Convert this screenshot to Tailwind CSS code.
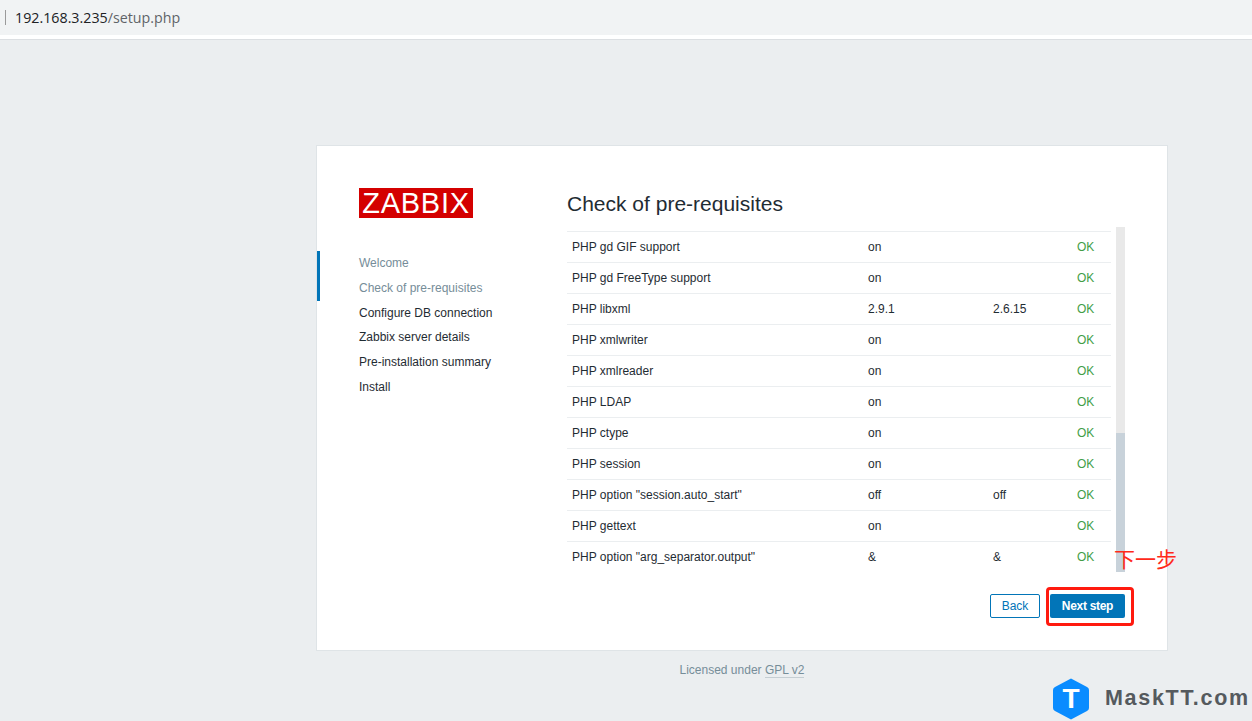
<!DOCTYPE html>
<html lang="en">
<head>
    <meta charset="UTF-8">
    <title>Zabbix setup</title>
    <script src="https://cdn.jsdelivr.net/npm/@tailwindcss/browser@4"></script>
</head>
<body class="relative h-[721px] w-[1252px] overflow-hidden bg-[#ebeef0] font-['Liberation_Sans',Arial,sans-serif] text-[12px] text-[#1f2c33]">

    <!-- browser address bar -->
    <div class="flex h-[35px] items-center bg-[#f1f3f4] pl-[5px]">
        <div class="h-[15px] w-px bg-[#9a9a9a]"></div>
        <div class="ml-[9px] font-['Open_Sans',sans-serif] text-[14.25px] text-[#202124]">192.168.3.235<span class="text-[#5f6368]">/setup.php</span></div>
    </div>
    <div class="h-[5px] border-b border-[#dcdfe2] bg-white"></div>

    <!-- setup card -->
    <div class="ml-[316px] mt-[105px] flex h-[506px] w-[852px] border border-[#dfe4e7] bg-white">
        <div class="w-[250px] shrink-0 pt-[42px]">
            <div class="ml-[42px] flex h-[30px] w-[114px] items-center justify-center bg-[#d40000] text-[29px] leading-none tracking-[0.75px] text-white">ZABBIX</div>
            <ul class="mt-[33px] leading-[14px]">
                <li class="border-l-[3px] border-[#0275b8] pb-[11px] pl-[39px] pt-[5px] text-[#768d99]">Welcome</li>
                <li class="border-l-[3px] border-[#0275b8] pb-[6px] pl-[39px] text-[#768d99]">Check of pre-requisites</li>
                <li class="mt-[5px] pl-[42px]">Configure DB connection</li>
                <li class="mt-[10px] pl-[42px]">Zabbix server details</li>
                <li class="mt-[11px] pl-[42px]">Pre-installation summary</li>
                <li class="mt-[11px] pl-[42px]">Install</li>
            </ul>
        </div>

        <div class="w-[558px] shrink-0">
            <h1 class="mt-[45px] h-[36px] text-[21px] leading-[26px] text-[#1f2c33]">Check of pre-requisites</h1>
            <div class="flex h-[345px]">
                <div class="w-[544px] pt-[4px]">
                    <div class="grid h-[31px] grid-cols-[296px_125px_84px_1fr] items-center border-t border-[#ebeef0] pl-[5px]"><span>PHP gd GIF support</span><span>on</span><span></span><span class="text-[#429e47]">OK</span></div>
                    <div class="grid h-[31px] grid-cols-[296px_125px_84px_1fr] items-center border-t border-[#ebeef0] pl-[5px]"><span>PHP gd FreeType support</span><span>on</span><span></span><span class="text-[#429e47]">OK</span></div>
                    <div class="grid h-[31px] grid-cols-[296px_125px_84px_1fr] items-center border-t border-[#ebeef0] pl-[5px]"><span>PHP libxml</span><span>2.9.1</span><span>2.6.15</span><span class="text-[#429e47]">OK</span></div>
                    <div class="grid h-[31px] grid-cols-[296px_125px_84px_1fr] items-center border-t border-[#ebeef0] pl-[5px]"><span>PHP xmlwriter</span><span>on</span><span></span><span class="text-[#429e47]">OK</span></div>
                    <div class="grid h-[31px] grid-cols-[296px_125px_84px_1fr] items-center border-t border-[#ebeef0] pl-[5px]"><span>PHP xmlreader</span><span>on</span><span></span><span class="text-[#429e47]">OK</span></div>
                    <div class="grid h-[31px] grid-cols-[296px_125px_84px_1fr] items-center border-t border-[#ebeef0] pl-[5px]"><span>PHP LDAP</span><span>on</span><span></span><span class="text-[#429e47]">OK</span></div>
                    <div class="grid h-[31px] grid-cols-[296px_125px_84px_1fr] items-center border-t border-[#ebeef0] pl-[5px]"><span>PHP ctype</span><span>on</span><span></span><span class="text-[#429e47]">OK</span></div>
                    <div class="grid h-[31px] grid-cols-[296px_125px_84px_1fr] items-center border-t border-[#ebeef0] pl-[5px]"><span>PHP session</span><span>on</span><span></span><span class="text-[#429e47]">OK</span></div>
                    <div class="grid h-[31px] grid-cols-[296px_125px_84px_1fr] items-center border-t border-[#ebeef0] pl-[5px]"><span>PHP option "session.auto_start"</span><span>off</span><span>off</span><span class="text-[#429e47]">OK</span></div>
                    <div class="grid h-[31px] grid-cols-[296px_125px_84px_1fr] items-center border-t border-[#ebeef0] pl-[5px]"><span>PHP gettext</span><span>on</span><span></span><span class="text-[#429e47]">OK</span></div>
                    <div class="grid h-[31px] grid-cols-[296px_125px_84px_1fr] items-center border-t border-[#ebeef0] pl-[5px]"><span>PHP option "arg_separator.output"</span><span>&amp;</span><span>&amp;</span><span class="text-[#429e47]">OK</span></div>
                </div>
                <!-- scrollbar -->
                <div class="ml-[5px] flex w-[9px] flex-col bg-[#e9e9e9]">
                    <div class="mt-auto h-[139px] bg-[#c8d2da]"></div>
                </div>
            </div>
            <div class="mt-[22px] flex justify-end gap-[10px]">
                <button class="h-[24px] w-[50px] rounded-[2px] border border-[#0275b8] bg-white text-[#0275b8]">Back</button>
                <button class="h-[24px] w-[75px] rounded-[2px] bg-[#0275b8] font-bold tracking-[-0.3px] text-white">Next step</button>
            </div>
        </div>
    </div>

    <div class="ml-[316px] mt-[12px] w-[852px] text-center leading-[14px] text-[#768d99]">Licensed under <span class="border-b border-[#c5ced3]">GPL v2</span></div>

    <!-- annotation on top of the screenshot -->
    <div class="absolute left-[1046px] top-[587px] h-[39px] w-[88px] rounded-[4px] border-[3px] border-[#ff1a0f]"></div>
    <div class="absolute left-[1114px] top-[543px] font-['Noto_Sans_CJK_SC',sans-serif] text-[21px] leading-[30px] text-[#ff2a1a]">下一步</div>

    <!-- watermark -->
    <div class="absolute left-[1053px] top-[678px] flex items-center">
        <div class="relative h-[42px] w-[36px]">
            <svg class="absolute inset-0" width="36" height="42" viewBox="0 0 36 42"><path d="M18 0.5 L34 9 Q36 10 36 12 L36 30 Q36 32 34 33 L18 41.5 L2 33 Q0 32 0 30 L0 12 Q0 10 2 9 Z" fill="#0a8cff"/></svg>
            <span class="absolute inset-0 flex items-center justify-center text-[28px] font-bold leading-none text-white">T</span>
        </div>
        <div class="ml-[16px] text-[21.5px] font-bold leading-none tracking-[1.7px] text-[#555a5e]">MaskTT.com</div>
    </div>
</body>
</html>
